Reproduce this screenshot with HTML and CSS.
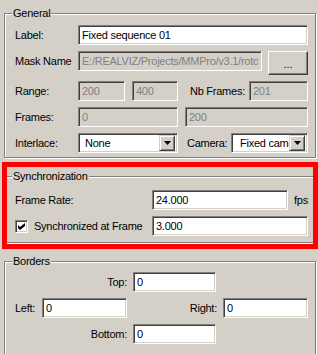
FILE: index.html
```html
<!DOCTYPE html>
<html lang="en">
<head>
    <meta charset="UTF-8">
    <meta name="viewport" content="width=device-width, initial-scale=1.0">
    <title>Sequence Properties</title>
    <link rel="stylesheet" href="styles.css">
</head>
<body>
    <div class="panel">
        <fieldset class="group general">
            <legend>General</legend>
            <div class="rows">
                <div class="row">
                    <label class="lbl">Label:</label>
                    <input class="field grow" type="text" value="Fixed sequence 01">
                </div>
                <div class="row top">
                    <label class="lbl tall">Mask Name</label>
                    <input class="field mask" type="text" value="E:/REALVIZ/Projects/MMPro/v3.1/rotoscoping" disabled>
                    <button class="btn browse">...</button>
                </div>
                <div class="row">
                    <label class="lbl">Range:</label>
                    <input class="field range-a" type="text" value="200" disabled>
                    <input class="field range-b" type="text" value="400" disabled>
                    <label class="lbl nb">Nb Frames:</label>
                    <input class="field grow" type="text" value="201" disabled>
                </div>
                <div class="row">
                    <label class="lbl">Frames:</label>
                    <input class="field frames-a" type="text" value="0" disabled>
                    <input class="field grow" type="text" value="200" disabled>
                </div>
                <div class="row">
                    <label class="lbl">Interlace:</label>
                    <div class="combo interlace">
                        <span class="combo-value">None</span>
                        <span class="combo-btn"><svg width="7" height="4" viewBox="0 0 7 4"><path d="M0 0h7L3.5 4z" fill="#000"/></svg></span>
                    </div>
                    <label class="lbl camera">Camera:</label>
                    <div class="combo grow">
                        <span class="combo-value cam">Fixed camera</span>
                        <span class="combo-btn"><svg width="7" height="4" viewBox="0 0 7 4"><path d="M0 0h7L3.5 4z" fill="#000"/></svg></span>
                    </div>
                </div>
            </div>
        </fieldset>

        <fieldset class="group sync">
            <legend>Synchronization</legend>
            <div class="rows">
                <div class="row">
                    <label class="lbl wide">Frame Rate:</label>
                    <input class="field rate" type="text" value="24.000">
                    <span class="unit">fps</span>
                </div>
                <div class="row">
                    <label class="lbl wide checkline">
                        <span class="check"><svg width="7" height="7" viewBox="0 0 7 7"><path d="M0 2l2 2 5-4v3l-5 4-2-2z" fill="#000"/></svg></span>
                        Synchronized at Frame
                    </label>
                    <input class="field grow" type="text" value="3.000">
                </div>
            </div>
        </fieldset>

        <fieldset class="group borders">
            <legend>Borders</legend>
            <div class="border-grid">
                <label class="lbl right top-lbl">Top:</label>
                <input class="field top-in" type="text" value="0">

                <label class="lbl left-lbl">Left:</label>
                <input class="field left-in" type="text" value="0">
                <label class="lbl right right-lbl">Right:</label>
                <input class="field right-in" type="text" value="0">

                <label class="lbl right bottom-lbl">Bottom:</label>
                <input class="field bottom-in" type="text" value="0">
            </div>
        </fieldset>

        <div class="highlight"></div>
    </div>
</body>
</html>
```

FILE: styles.css
```css
html, body {
    margin: 0;
    padding: 0;
}
body {
    width: 318px;
    height: 354px;
    overflow: hidden;
    background-color: #d4d0c8;
    font-family: "Liberation Sans", Arial, sans-serif;
    font-size: 11px;
    letter-spacing: -0.25px;
    color: #000;
}
.panel {
    position: relative;
    padding: 7px 2px 0 4px;
}

/* etched group boxes */
.group {
    margin: 0;
    padding: 0;
    min-width: 0;
    border: 1px solid #808080;
    box-shadow: inset 1px 1px 0 #fff, 1px 1px 0 #fff;
}
.group legend {
    margin-left: 7px;
    padding: 0 1px;
    line-height: 13px;
    background-color: #d4d0c8;
}
.sync,
.borders {
    margin-top: 12px;
}
.general .rows {
    padding: 5px 7px 4px 10px;
}
.sync .rows {
    padding: 7px 7px 6px 10px;
}
.rows {
    display: flex;
    flex-direction: column;
    gap: 6px;
}
.row {
    display: flex;
    align-items: center;
}
.row.top {
    align-items: flex-start;
}

.lbl {
    flex: none;
    width: 63px;
    white-space: nowrap;
}
.lbl.tall {
    line-height: 20px;
}
.lbl.nb {
    width: 59px;
    margin-left: 12px;
}
.lbl.camera {
    width: 44px;
    margin-left: 9px;
}
.lbl.wide {
    width: 137px;
}
.lbl.right {
    text-align: right;
}

/* sunken edit fields */
.field {
    box-sizing: border-box;
    height: 20px;
    margin: 0;
    padding: 0 3px;
    border: 1px solid;
    border-color: #808080 #fff #fff #808080;
    box-shadow: inset 1px 1px 0 #404040, inset -1px -1px 0 #d4d0c8;
    background-color: #fff;
    font-family: inherit;
    font-size: 11px;
    letter-spacing: inherit;
    color: #000;
    outline: none;
    min-width: 0;
}
.field:disabled {
    background-color: #d4d0c8;
    color: #808080;
}
.grow {
    flex: 1;
}
.mask {
    width: 184px;
}
.range-a {
    width: 47px;
}
.range-b {
    width: 46px;
    margin-left: 7px;
}
.frames-a {
    width: 100px;
    margin-right: 7px;
}
.rate {
    width: 136px;
}
.unit {
    margin-left: 6px;
}

/* raised push button */
.btn {
    box-sizing: border-box;
    margin: 0 0 0 6px;
    padding: 2px 0 0;
    border: 1px solid;
    border-color: #fff #404040 #404040 #fff;
    box-shadow: inset -1px -1px 0 #808080;
    background-color: #d4d0c8;
    font-family: inherit;
    font-size: 11px;
    color: #000;
}
.browse {
    width: 40px;
    height: 24px;
}

/* combo boxes */
.combo {
    box-sizing: border-box;
    height: 20px;
    display: flex;
    align-items: center;
    padding: 2px;
    border: 1px solid;
    border-color: #808080 #fff #fff #808080;
    box-shadow: inset 1px 1px 0 #404040, inset -1px -1px 0 #d4d0c8;
    background-color: #fff;
    min-width: 0;
}
.combo.interlace {
    width: 100px;
}
.combo-value {
    flex: 1;
    padding-left: 4px;
    overflow: hidden;
    white-space: nowrap;
}
.combo-value.cam {
    padding-left: 6px;
}
.combo-btn {
    box-sizing: border-box;
    flex: none;
    width: 16px;
    height: 16px;
    display: flex;
    align-items: center;
    justify-content: center;
    border: 1px solid;
    border-color: #d4d0c8 #404040 #404040 #d4d0c8;
    box-shadow: inset 1px 1px 0 #fff, inset -1px -1px 0 #808080;
    background-color: #d4d0c8;
}
.combo-btn svg {
    display: block;
}

/* checkbox */
.checkline {
    display: flex;
    align-items: center;
    gap: 6px;
}
.check {
    box-sizing: border-box;
    width: 13px;
    height: 13px;
    padding: 2px 0 0 2px;
    border: 1px solid;
    border-color: #808080 #fff #fff #808080;
    box-shadow: inset 1px 1px 0 #404040, inset -1px -1px 0 #d4d0c8;
    background-color: #fff;
}
.check svg {
    display: block;
}

/* borders grid */
.border-grid {
    display: grid;
    grid-template-columns: 27px 85px 96px 85px;
    grid-auto-rows: 20px;
    row-gap: 6px;
    align-items: center;
    padding: 4px 0 20px 10px;
}
.border-grid .lbl {
    width: auto;
}
.top-lbl {
    grid-row: 1;
    grid-column: 1 / 3;
}
.top-in {
    grid-row: 1;
    grid-column: 3;
    width: 83px;
    margin-left: 6px;
}
.left-lbl {
    grid-row: 2;
    grid-column: 1;
}
.left-in {
    grid-row: 2;
    grid-column: 2;
}
.right-lbl {
    grid-row: 2;
    grid-column: 3;
    padding-right: 6px;
}
.right-in {
    grid-row: 2;
    grid-column: 4;
}
.bottom-lbl {
    grid-row: 3;
    grid-column: 1 / 3;
}
.bottom-in {
    grid-row: 3;
    grid-column: 3;
    width: 83px;
    margin-left: 6px;
}

/* red annotation frame drawn over the synchronization group */
.highlight {
    position: absolute;
    left: 2px;
    top: 162px;
    width: 316px;
    height: 87px;
    box-sizing: border-box;
    border: 5px solid #ff0000;
    pointer-events: none;
}
```
